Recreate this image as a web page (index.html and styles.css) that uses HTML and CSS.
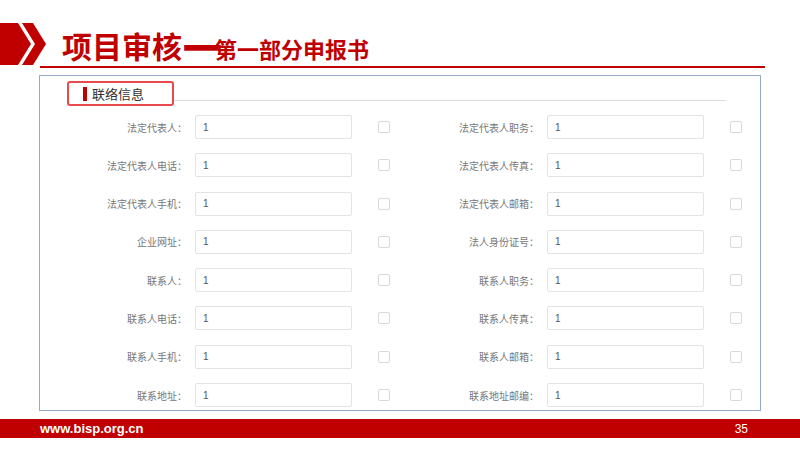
FILE: index.html
```html
<!DOCTYPE html>
<html lang="zh-CN">

<head>
    <meta charset="UTF-8">
    <meta name="viewport" content="width=device-width, initial-scale=1.0">
    <title>项目审核 — 第一部分申报书</title>
    <link rel="stylesheet" href="styles.css">
</head>

<body>
    <div class="slide">
        <!-- Title -->
        <header class="top">
            <svg class="arrow" width="48" height="42" viewBox="0 0 48 42">
                <polygon points="0,0 18,0 31,21 18,42 0,42" fill="#c00000" />
                <polygon points="22,0 33,0 46,21 33,42 22,42 35,21" fill="#c00000" />
            </svg>
            <h1 class="title"><span class="big">项目审核<span class="dash">—</span></span><span class="sub">第一部分申报书</span></h1>
        </header>
        <div class="rule"></div>

        <!-- Contact panel -->
        <section class="panel">
            <div class="panel-head">
                <div class="tab"><i class="bar"></i>联络信息</div>
                <div class="head-line"></div>
            </div>

            <div class="form-grid">
                <div class="field"><label>法定代表人：</label><input type="text" value="1" readonly><span class="check"></span></div>
                <div class="field"><label>法定代表人职务：</label><input type="text" value="1" readonly><span class="check"></span></div>

                <div class="field"><label>法定代表人电话：</label><input type="text" value="1" readonly><span class="check"></span></div>
                <div class="field"><label>法定代表人传真：</label><input type="text" value="1" readonly><span class="check"></span></div>

                <div class="field"><label>法定代表人手机：</label><input type="text" value="1" readonly><span class="check"></span></div>
                <div class="field"><label>法定代表人邮箱：</label><input type="text" value="1" readonly><span class="check"></span></div>

                <div class="field"><label>企业网址：</label><input type="text" value="1" readonly><span class="check"></span></div>
                <div class="field"><label>法人身份证号：</label><input type="text" value="1" readonly><span class="check"></span></div>

                <div class="field"><label>联系人：</label><input type="text" value="1" readonly><span class="check"></span></div>
                <div class="field"><label>联系人职务：</label><input type="text" value="1" readonly><span class="check"></span></div>

                <div class="field"><label>联系人电话：</label><input type="text" value="1" readonly><span class="check"></span></div>
                <div class="field"><label>联系人传真：</label><input type="text" value="1" readonly><span class="check"></span></div>

                <div class="field"><label>联系人手机：</label><input type="text" value="1" readonly><span class="check"></span></div>
                <div class="field"><label>联系人邮箱：</label><input type="text" value="1" readonly><span class="check"></span></div>

                <div class="field"><label>联系地址：</label><input type="text" value="1" readonly><span class="check"></span></div>
                <div class="field"><label>联系地址邮编：</label><input type="text" value="1" readonly><span class="check"></span></div>
            </div>
        </section>

        <footer class="bottom">
            <span class="site">www.bisp.org.cn</span>
            <span class="page">35</span>
        </footer>
    </div>
</body>

</html>
```

FILE: styles.css
```css
body {
    margin: 0;
    padding: 0;
    background-color: #fff;
    font-family: "Noto Sans CJK SC", "Liberation Sans", sans-serif;
}

.slide {
    width: 800px;
    height: 449px;
    overflow: hidden;
}

.top {
    display: flex;
    align-items: center;
    height: 42px;
    padding-top: 23px;
}

.arrow {
    display: block;
    flex-shrink: 0;
}

.title {
    margin: 0 0 0 14px;
    color: #c00000;
    font-weight: bold;
    line-height: 1;
    white-space: nowrap;
}

.title .big {
    font-size: 30px;
}

/* the dash is drawn heavier and longer than the font's own */
.title .dash {
    display: inline-block;
    width: 33px;
    transform-origin: left center;
    transform: translateY(-6px) scale(1.5, 2);
}

.title .sub {
    font-size: 22px;
}

.rule {
    height: 2px;
    margin: 1px 35px 0 40px;
    background-color: #c00000;
}

.panel {
    width: 720px;
    height: 329px;
    margin: 7px 0 0 39px;
    padding-top: 5px;
    border: 1px solid #94abcc;
}

.panel-head {
    display: flex;
    align-items: flex-end;
}

.tab {
    display: flex;
    align-items: center;
    box-sizing: border-box;
    width: 107px;
    height: 25px;
    margin-left: 27px;
    padding-left: 14px;
    border: 2px solid #ea4a4e;
    border-radius: 3px;
    font-size: 13px;
    color: #333;
}

.bar {
    display: block;
    width: 4px;
    height: 14px;
    margin-right: 5px;
    background-color: #c00000;
}

.head-line {
    flex: 1;
    margin: 0 34px 5px 0;
    border-bottom: 1px solid #dcdcdc;
}

.form-grid {
    display: grid;
    grid-template-columns: 352px 352px;
    grid-auto-rows: 24px;
    row-gap: 14.3px;
    margin: 9px 0 0 20px;
}

.field {
    display: flex;
    align-items: center;
}

.field label {
    width: 127px;
    text-align: right;
    font-size: 10px;
    color: #777;
    white-space: nowrap;
}

.field input[type="text"] {
    box-sizing: border-box;
    width: 157px;
    height: 24px;
    margin: 0 0 0 8px;
    padding: 0 0 0 7px;
    border: 1px solid #e3e3e3;
    border-radius: 2px;
    font-family: "Liberation Sans", sans-serif;
    font-size: 10px;
    color: #555;
    outline: none;
}

.check {
    display: block;
    box-sizing: border-box;
    width: 12px;
    height: 12px;
    margin-left: 26px;
    border: 1px solid #d9d9d9;
    border-radius: 2px;
}

.bottom {
    display: flex;
    justify-content: space-between;
    align-items: center;
    height: 19px;
    margin-top: 8px;
    padding: 0 52px 0 40px;
    background-color: #c00000;
    color: #fff;
    font-family: "Liberation Sans", sans-serif;
}

.site {
    font-size: 13px;
    font-weight: bold;
}

.page {
    font-size: 12px;
}
```
